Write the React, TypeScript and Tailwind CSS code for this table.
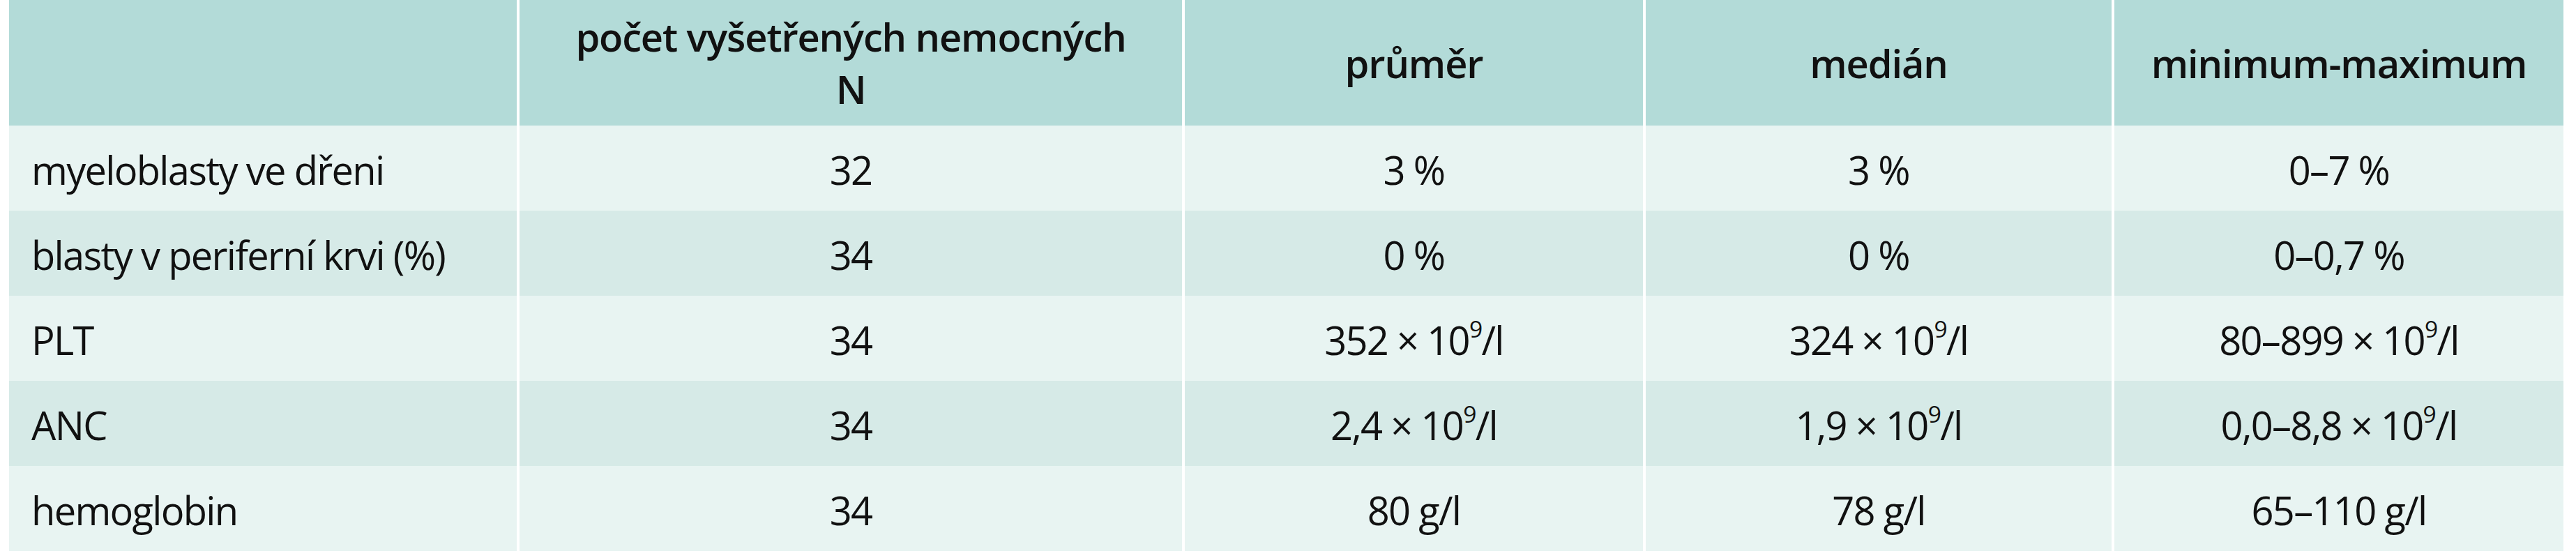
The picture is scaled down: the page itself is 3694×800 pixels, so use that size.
const headers = [
  { label: "", sub: null as string | null },
  { label: "počet vyšetřených nemocných", sub: "N" },
  { label: "průměr", sub: null },
  { label: "medián", sub: null },
  { label: "minimum-maximum", sub: null },
];

type Val = { text: string; exp?: boolean };

const rows: { name: string; n: string; vals: [string, string, string]; exp?: boolean }[] = [
  { name: "myeloblasty ve dřeni", n: "32", vals: ["3 %", "3 %", "0–7 %"] },
  { name: "blasty v periferní krvi (%)", n: "34", vals: ["0 %", "0 %", "0–0,7 %"] },
  { name: "PLT", n: "34", vals: ["352 × 10", "324 × 10", "80–899 × 10"], exp: true },
  { name: "ANC", n: "34", vals: ["2,4 × 10", "1,9 × 10", "0,0–8,8 × 10"], exp: true },
  { name: "hemoglobin", n: "34", vals: ["80 g/l", "78 g/l", "65–110 g/l"] },
];

function Value({ text, exp }: Val) {
  if (!exp) return <span>{text}</span>;
  return (
    <span>
      {text}
      <sup className="text-[0.6em] -top-[0.75em]">9</sup>/l
    </span>
  );
}

export default function App() {
  return (
    <div
      className="w-[3694px] h-[800px] bg-white pl-[13px] text-[#111] text-[56px] leading-none"
      style={{ fontFamily: '"Open Sans", "Noto Sans", sans-serif' }}
    >
      <div className="grid grid-cols-[728px_950px_657px_668px_644px] gap-x-1 w-fit">
        {headers.map((h, i) => (
          <div
            key={i}
            className="h-[180px] bg-[#b3dbd8] flex flex-col items-center justify-center font-semibold tracking-[-0.02em] leading-[75px]"
          >
            {h.label && <span>{h.label}</span>}
            {h.sub && <span>{h.sub}</span>}
          </div>
        ))}
        {rows.map((r, ri) => {
          const bg = ri % 2 === 0 ? "bg-[#e8f4f2]" : "bg-[#d6eae7]";
          return [
            <div key={`${ri}-a`} className={`h-[122px] ${bg} flex items-center pl-8 pt-1 tracking-[-0.03em]`}>
              {r.name}
            </div>,
            <div key={`${ri}-b`} className={`h-[122px] ${bg} flex items-center justify-center pt-1 tracking-[-0.03em]`}>
              {r.n}
            </div>,
            ...r.vals.map((v, vi) => (
              <div key={`${ri}-${vi}`} className={`h-[122px] ${bg} flex items-center justify-center pt-1 tracking-[-0.03em]`}>
                <Value text={v} exp={r.exp} />
              </div>
            )),
          ];
        })}
      </div>
    </div>
  );
}
